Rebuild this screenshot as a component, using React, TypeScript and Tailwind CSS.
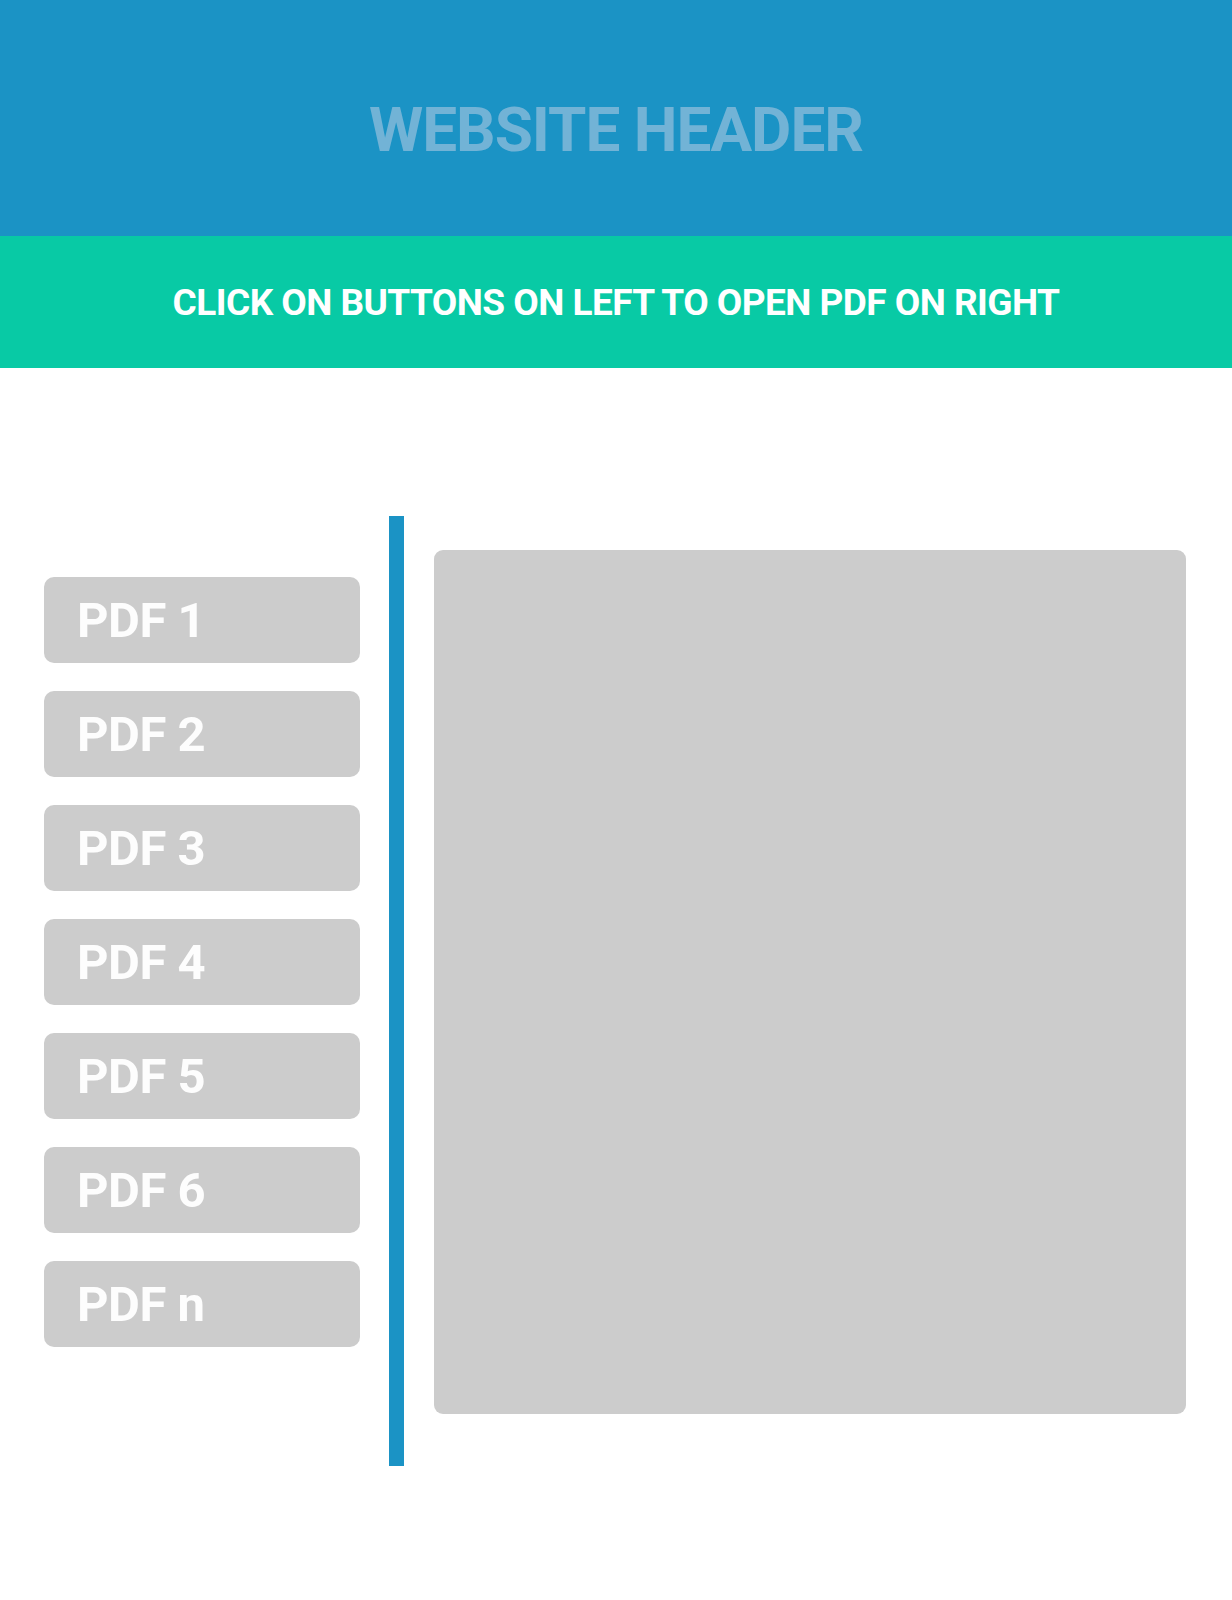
const pdfs = ["PDF 1", "PDF 2", "PDF 3", "PDF 4", "PDF 5", "PDF 6", "PDF n"];

const App = () => {
  return (
    <div className="min-h-[1600px] w-full bg-white font-['Roboto',sans-serif]">
      <header className="flex h-[236px] items-center justify-center bg-[#1b93c5] pt-[24px]">
        <h1 className="text-[62px] font-bold leading-none tracking-[-1px] text-[#72b3d6]">
          WEBSITE HEADER
        </h1>
      </header>

      <div className="flex h-[132px] items-center justify-center bg-[#08caa5]">
        <p className="text-[37px] font-bold leading-none tracking-[-0.55px] text-white">
          CLICK ON BUTTONS ON LEFT TO OPEN PDF ON RIGHT
        </p>
      </div>

      <main className="flex items-start pl-[44px] pt-[148px]">
        <div className="mt-[61px] flex w-[316px] flex-col gap-[28px]">
          {pdfs.map((name) => (
            <button
              key={name}
              className="flex h-[86px] items-center rounded-[10px] bg-[#cccccc] pl-[33px] text-left text-[49px] font-bold leading-none tracking-[-0.5px] text-[#fdfdfd]"
            >
              {name}
            </button>
          ))}
        </div>

        <div className="ml-[29px] h-[950px] w-[15px] bg-[#1b93c5]" />

        <div className="ml-[30px] mt-[34px] h-[864px] w-[752px] rounded-[9px] bg-[#cccccc]" />
      </main>
    </div>
  );
};

export default App;
